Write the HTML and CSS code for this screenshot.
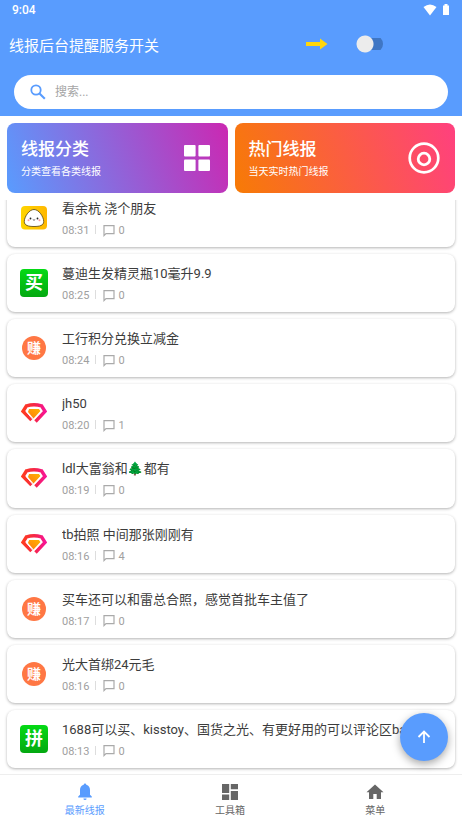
FILE: index.html
```html
<!DOCTYPE html>
<html lang="zh-CN">
<head>
<meta charset="utf-8">
<meta name="viewport" content="width=device-width, initial-scale=1">
<title>最新线报</title>
<link rel="stylesheet" href="styles.css">
</head>
<body>
<svg class="defs" width="0" height="0" aria-hidden="true">
  <defs>
    <linearGradient id="warm" x1="0" x2="1" y1="1" y2="0"><stop offset="0" stop-color="#ff7a10"/><stop offset="1" stop-color="#ffb400"/></linearGradient>
    <linearGradient id="ring" x1="0" x2="1"><stop offset="0" stop-color="#ff3b20"/><stop offset=".55" stop-color="#f5264a"/><stop offset="1" stop-color="#f71494"/></linearGradient>
    <linearGradient id="yellow" x1="0" x2="1"><stop offset="0" stop-color="#ffd500"/><stop offset="1" stop-color="#ffb800"/></linearGradient>
    <symbol id="chat" viewBox="0 0 12 12"><path d="M1 .6h10v8H3L1 10.600Z" fill="none" stroke="#aaa" stroke-width="1.200"/></symbol>
    <symbol id="gem" viewBox="0 0 26 20">
      <path d="M10.500 17 2 8.300 5.500 2.800Q13 .8 20.500 2.800L24 8.300 14.500 18.500" fill="none" stroke="url(#ring)" stroke-width="3.400"/>
      <path d="M8 6h10l1.500 2-7 7.500-5.500-6.500Z" fill="url(#warm)"/>
      <path d="M11.500 16 5.500 9l2-3.500h11L20.500 8l-7 8" fill="none" stroke="#fff" stroke-width="1"/>
    </symbol>
  </defs>
</svg>
<div class="app">
  <header class="header">
    <div class="status">
      <span>9:04</span>
      <span class="status-icons">
        <svg width="14" height="12" viewBox="0 0 14 12" aria-hidden="true"><path d="M.5 3Q7-2 13.500 3L7 11.500Z" fill="#fff"/></svg>
        <svg width="6" height="12" viewBox="0 0 6 12" aria-hidden="true"><path d="M1.500 0h3v1.500H6V11H0V1.500h1.500Z" fill="#fff"/></svg>
      </span>
    </div>
    <div class="service">
      <label for="service">线报后台提醒服务开关</label>
      <svg class="pointer" width="22" height="12" viewBox="0 0 22 12" aria-hidden="true"><path d="M0 4h14V.5L21.500 6 14 11.500V8H0Z" fill="#ffd60a"/></svg>
      <input class="switch" id="service" type="checkbox">
    </div>
    <div class="search">
      <svg width="16" height="16" viewBox="0 0 16 16" aria-hidden="true"><circle cx="6" cy="6" r="4.700" fill="none" stroke="#599cfe" stroke-width="1.800"/><path d="m9.500 9.500 5.300 5.300" stroke="#599cfe" stroke-width="2.100"/></svg>
      <input type="text" aria-label="搜索" placeholder="搜索...">
    </div>
  </header>

  <div class="promos">
    <a class="promo promo-category" href="#category">
      <span><strong>线报分类</strong><small>分类查看各类线报</small></span>
      <svg width="26" height="26" viewBox="0 0 26 26" aria-hidden="true" fill="#fff"><rect width="11.600" height="11.600" rx="1"/><rect x="14.400" width="11.600" height="11.600" rx="1"/><rect y="14.400" width="11.600" height="11.600" rx="1"/><rect x="14.400" y="14.400" width="11.600" height="11.600" rx="1"/></svg>
    </a>
    <a class="promo promo-hot" href="#hot">
      <span><strong>热门线报</strong><small>当天实时热门线报</small></span>
      <svg width="32" height="32" viewBox="0 0 32 32" aria-hidden="true" fill="none" stroke="#fff"><circle cx="16" cy="16" r="14.300" stroke-width="2.700"/><circle cx="16" cy="17" r="5.800" stroke-width="2.800"/></svg>
    </a>
  </div>

  <main class="viewport">
    <ul class="list">
      <li class="card">
        <svg width="28" height="24" viewBox="0 0 28 24" aria-hidden="true"><rect x="1" width="26" height="23.500" rx="4" fill="url(#yellow)"/><path d="M14 3.500C9 3.500 4.300 11 4.300 15.500c0 4 4 5 9.700 5s9.700-1 9.700-5c0-4.500-4.700-12-9.700-12Z" fill="#fff" stroke="#54400c" stroke-width=".8"/><circle cx="10.500" cy="12.500" r=".9" fill="#222"/><circle cx="17.500" cy="12.500" r=".9" fill="#222"/><path d="m12.800 13.500 1.200.8 1.200-.8" fill="none" stroke="#444" stroke-width=".8"/><circle cx="8.500" cy="14.300" r="1" fill="#ff9aa2"/><circle cx="19.500" cy="14.300" r="1" fill="#ff9aa2"/></svg>
        <div class="body"><h2>看余杭 浇个朋友</h2><p><time>08:31</time><svg width="12" height="12"><use href="#chat"/></svg><span>0</span></p></div>
      </li>
      <li class="card">
        <span class="tile">买</span>
        <div class="body"><h2>蔓迪生发精灵瓶10毫升9.9</h2><p><time>08:25</time><svg width="12" height="12"><use href="#chat"/></svg><span>0</span></p></div>
      </li>
      <li class="card">
        <span class="coin">赚</span>
        <div class="body"><h2>工行积分兑换立减金</h2><p><time>08:24</time><svg width="12" height="12"><use href="#chat"/></svg><span>0</span></p></div>
      </li>
      <li class="card">
        <svg width="26" height="20" aria-hidden="true"><use href="#gem"/></svg>
        <div class="body"><h2>jh50</h2><p><time>08:20</time><svg width="12" height="12"><use href="#chat"/></svg><span>1</span></p></div>
      </li>
      <li class="card">
        <svg width="26" height="20" aria-hidden="true"><use href="#gem"/></svg>
        <div class="body"><h2>ldl大富翁和🌲都有</h2><p><time>08:19</time><svg width="12" height="12"><use href="#chat"/></svg><span>0</span></p></div>
      </li>
      <li class="card">
        <svg width="26" height="20" aria-hidden="true"><use href="#gem"/></svg>
        <div class="body"><h2>tb拍照 中间那张刚刚有</h2><p><time>08:16</time><svg width="12" height="12"><use href="#chat"/></svg><span>4</span></p></div>
      </li>
      <li class="card">
        <span class="coin">赚</span>
        <div class="body"><h2>买车还可以和雷总合照，感觉首批车主值了</h2><p><time>08:17</time><svg width="12" height="12"><use href="#chat"/></svg><span>0</span></p></div>
      </li>
      <li class="card">
        <span class="coin">赚</span>
        <div class="body"><h2>光大首绑24元毛</h2><p><time>08:16</time><svg width="12" height="12"><use href="#chat"/></svg><span>0</span></p></div>
      </li>
      <li class="card">
        <span class="tile">拼</span>
        <div class="body"><h2>1688可以买、kisstoy、国货之光、有更好用的可以评论区bat</h2><p><time>08:13</time><svg width="12" height="12"><use href="#chat"/></svg><span>0</span></p></div>
      </li>
    </ul>
    <button class="to-top" type="button" aria-label="回到顶部">
      <svg width="14" height="14" viewBox="0 0 14 14" aria-hidden="true"><path d="M7 13V2M1.500 7 7 1.500 12.500 7" fill="none" stroke="#fff" stroke-width="1.800"/></svg>
    </button>
  </main>

  <nav class="tabs">
    <a class="active" href="#latest">
      <svg width="18" height="18" viewBox="0 0 18 18" aria-hidden="true" fill="currentColor"><path d="M7.700 1.700a1.300 1.300 0 0 1 2.600 0C12.900 2.400 14 4.500 14 7v4.800l1.800 1.800v.9H2.200v-.9L4 11.800V7c0-2.500 1.100-4.600 3.700-5.300ZM7.400 15.500h3.200a1.600 1.600 0 0 1-3.200 0Z"/></svg>
      最新线报
    </a>
    <a href="#tools">
      <svg width="18" height="18" viewBox="0 0 18 18" aria-hidden="true" fill="currentColor"><path d="M1 1h7.200v9H1zM9.800 1H17v5.200H9.800zM1 11.500h7.200V17H1zM9.800 8H17v9H9.800z"/></svg>
      工具箱
    </a>
    <a href="#menu">
      <svg width="18" height="18" viewBox="0 0 18 18" aria-hidden="true" fill="currentColor"><path d="M9 1.500.5 9.200H3V16h4.300v-5h3.400v5H15V9.200h2.500Z"/></svg>
      菜单
    </a>
  </nav>
</div>
</body>
</html>
```
FILE: styles.css
```css
* { box-sizing: border-box; }

body {
  margin: 0;
  background: #fff;
  font-family: Roboto, "Noto Sans CJK SC", "Noto Color Emoji", sans-serif;
  color: #3c3c3c;
}

.defs { position: absolute; }

svg { display: block; flex: none; }

.app {
  display: flex;
  flex-direction: column;
  height: 100vh;
}

.header {
  flex: none;
  padding: 0 14px 7px;
  background: #599cfe;
  color: #fff;
}

.status {
  display: flex;
  justify-content: space-between;
  align-items: center;
  height: 20px;
  margin-right: -1px;
  margin-left: -2px;
  font-size: 12px;
  font-weight: 500;
}

.status-icons { display: flex; gap: 6px; }

.service {
  display: flex;
  align-items: center;
  height: 48px;
  margin-left: -5px;
  padding-right: 65px;
  font-size: 15px;
}

.pointer { margin-left: auto; }

.switch {
  appearance: none;
  width: 27px;
  height: 18px;
  margin: 0 0 0 28px;
  border-radius: 9px;
  background:
    radial-gradient(circle at 9px 9px, #ececec 8px, transparent 9px),
    linear-gradient(#3f76c4, #3f76c4) right center / 20px 12px no-repeat;
  overflow: hidden;
}

.search {
  display: flex;
  align-items: center;
  gap: 9px;
  height: 34px;
  margin-top: 7px;
  padding: 0 16px;
  border-radius: 17px;
  background: #fff;
}

.search input {
  flex: 1;
  min-width: 0;
  padding: 0;
  border: 0;
  outline: 0;
  background: none;
  font: inherit;
  font-size: 12px;
}

.search input::placeholder { color: #a5a5a5; }

.promos {
  display: grid;
  grid-template-columns: 1fr 1fr;
  gap: 7px;
  flex: none;
  padding: 7px;
}

.promo {
  display: flex;
  justify-content: space-between;
  align-items: center;
  height: 70px;
  padding: 0 15px 0 14px;
  border-radius: 8px;
  color: #fff;
  text-decoration: none;
}

.promo-category { padding-right: 18px; background: linear-gradient(70deg, #599cfe, #cb28b2); }
.promo-hot { background: linear-gradient(70deg, #f77b05, #ff407f); }

.promo span { padding-top: 3px; }

.promo strong {
  display: block;
  font-size: 17px;
  font-weight: 500;
  line-height: 24px;
}

.promo small {
  display: block;
  font-size: 10px;
  line-height: 21px;
}

.viewport {
  position: relative;
  flex: 1;
  min-height: 0;
  overflow: hidden;
}

.list {
  display: flex;
  flex-direction: column;
  gap: 7px;
  height: calc(100% + 11px);
  margin: -11px 0 0;
  padding: 0 7px 6px;
  list-style: none;
}

.card {
  display: grid;
  grid-template-columns: 28px minmax(0, 1fr);
  align-items: center;
  justify-items: center;
  column-gap: 14px;
  flex: 1;
  padding: 0 14px 0 13px;
  border-radius: 8px;
  background: #fff;
  box-shadow: 0 1px 3px rgba(0, 0, 0, 0.3);
}

.tile,
.coin {
  display: grid;
  place-items: center;
  color: #fff;
  font-weight: 700;
}

.tile {
  width: 28px;
  height: 28px;
  border-radius: 4px;
  background: linear-gradient(#04da15, #04a811);
  font-size: 18px;
  line-height: 28px;
}

.coin {
  width: 24px;
  height: 24px;
  border-radius: 50%;
  background: #ff7744;
  font-size: 14px;
  line-height: 24px;
}

.body {
  width: 100%;
  padding-top: 3px;
}

.body h2 {
  margin: 0;
  overflow: hidden;
  font-size: 13px;
  font-weight: 400;
  line-height: 22px;
  white-space: nowrap;
}

.body p {
  display: flex;
  align-items: center;
  margin: 0;
  color: #a0a0a0;
  font-size: 11px;
  line-height: 21px;
}

.body time::after {
  display: inline-block;
  width: 1px;
  height: 9px;
  margin: 0 7px 0 6px;
  background: #ddd;
  content: "";
}

.body p span { margin-left: 3px; }

.to-top {
  position: absolute;
  right: 14px;
  bottom: 13px;
  display: grid;
  place-items: center;
  width: 48px;
  height: 48px;
  padding: 0;
  border: 0;
  border-radius: 50%;
  background: #599cfe;
  box-shadow: 0 3px 8px rgba(0, 0, 0, 0.35);
}

.tabs {
  display: grid;
  grid-template-columns: repeat(3, 1fr);
  flex: none;
  height: 49px;
  padding: 0 14px 0 12px;
  border-top: 1px solid #eee;
}

.tabs a {
  display: flex;
  flex-direction: column;
  align-items: center;
  padding-top: 8px;
  color: #666;
  font-size: 10px;
  line-height: 20px;
  text-decoration: none;
}

.tabs .active { color: #599cfe; }
```
